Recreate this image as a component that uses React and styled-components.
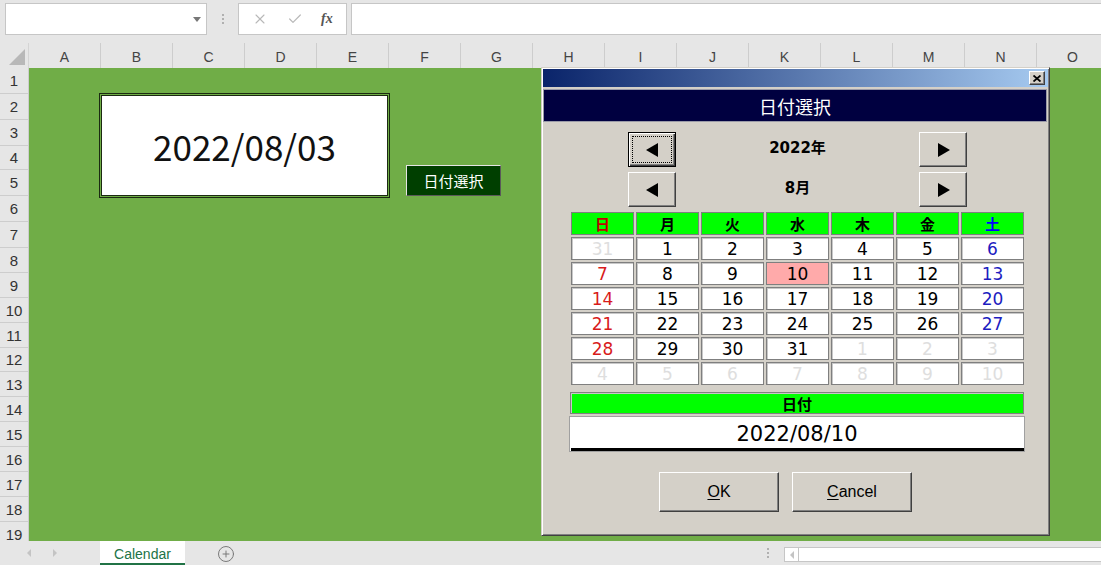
import styled, { createGlobalStyle } from "styled-components";
import { X, Check, CirclePlus } from "lucide-react";

const GlobalStyle = createGlobalStyle`
  html, body { margin: 0; padding: 0; }
  body {
    font-family: "Liberation Sans", "Noto Sans CJK JP", sans-serif;
    background: #e6e6e6;
    overflow: hidden;
  }
  * { box-sizing: border-box; }
`;

const COLS = "ABCDEFGHIJKLMNO".split("");
const ROW_H = [26, 26, 26, 24, 26, 26, 26, 25, 25, 25, 25, 24, 25, 25, 25, 25, 25, 25, 25];
const WEEK = ["日", "月", "火", "水", "木", "金", "土"];

// 2022年8月 (前後月は灰色)
const DAYS = [
  [31, 1, 2, 3, 4, 5, 6],
  [7, 8, 9, 10, 11, 12, 13],
  [14, 15, 16, 17, 18, 19, 20],
  [21, 22, 23, 24, 25, 26, 27],
  [28, 29, 30, 31, 1, 2, 3],
  [4, 5, 6, 7, 8, 9, 10],
];

const Root = styled.div`
  position: relative;
  width: 1101px;
  height: 565px;
  display: flex;
  flex-direction: column;
  overflow: hidden;
`;

/* ---------- formula bar ---------- */
const Toolbar = styled.div`
  height: 43px;
  flex-shrink: 0;
  display: flex;
  align-items: flex-start;
  padding: 3px 0 0 5px;
  background: #e6e6e6;
`;

const NameBox = styled.div`
  width: 202px;
  height: 32px;
  background: #fff;
  border: 1px solid #c6c6c6;
  display: flex;
  align-items: center;
  justify-content: flex-end;
  padding-right: 5px;

  &::after {
    content: "";
    border-left: 4px solid transparent;
    border-right: 4px solid transparent;
    border-top: 5px solid #777;
  }
`;

const Dots = styled.div`
  width: 31px;
  height: 32px;
  display: flex;
  flex-direction: column;
  align-items: center;
  justify-content: center;
  gap: 2px;

  span {
    width: 2px;
    height: 2px;
    background: #b0b0b0;
  }
`;

const FxBox = styled.div`
  width: 109px;
  height: 32px;
  background: #fff;
  border: 1px solid #c6c6c6;
  display: flex;
  align-items: center;
  justify-content: space-around;
  padding: 0 4px;
  color: #b8b8b8;

  i {
    font-family: "Liberation Serif", serif;
    font-size: 14px;
    color: #555;
    font-weight: bold;
  }
`;

const Formula = styled.div`
  flex: 1;
  height: 32px;
  margin-left: 4px;
  background: #fff;
  border: 1px solid #c6c6c6;
  border-right: none;
`;

/* ---------- sheet ---------- */
const Sheet = styled.div`
  flex: 1;
  min-height: 0;
  display: grid;
  grid-template-columns: 29px 1fr;
  grid-template-rows: 25px 1fr;
  overflow: hidden;
`;

const Corner = styled.div`
  position: relative;
  background: #e6e6e6;
  border-right: 1px solid #d4d4d4;

  &::after {
    content: "";
    position: absolute;
    right: 3px;
    bottom: 3px;
    border-left: 16px solid transparent;
    border-bottom: 16px solid #b8b8b8;
  }
`;

const ColHeads = styled.div`
  display: flex;
  overflow: hidden;
  background: #e6e6e6;
`;

const ColHead = styled.div`
  width: 72px;
  flex-shrink: 0;
  display: flex;
  align-items: center;
  justify-content: center;
  padding-top: 3px;
  border-right: 1px solid #cdcdcd;
  font-size: 14px;
  color: #444;
`;

const RowHeads = styled.div`
  display: flex;
  flex-direction: column;
  overflow: hidden;
  background: #e6e6e6;
  border-right: 1px solid #cdcdcd;
`;

const RowHead = styled.div`
  height: ${(p) => p.$h}px;
  flex-shrink: 0;
  display: flex;
  align-items: center;
  justify-content: center;
  border-bottom: 1px solid #cdcdcd;
  font-size: 15px;
  color: #333;
`;

const Cells = styled.div`
  position: relative;
  background: #70ad47;
`;

const DateBox = styled.div`
  position: absolute;
  left: 70px;
  top: 25px;
  width: 291px;
  height: 105px;
  border: 3px double #1b2a12;
  background: #fff;
  background-clip: padding-box;
  display: flex;
  align-items: center;
  justify-content: center;
  font-family: "Noto Sans CJK JP", sans-serif;
  font-size: 35px;
  color: #111;
`;

const PickButton = styled.div`
  position: absolute;
  left: 377px;
  top: 97px;
  width: 95px;
  height: 31px;
  background: #003f00;
  border: 1px solid;
  border-color: #e4e4e4 #5a5a5a #5a5a5a #e4e4e4;
  color: #fff;
  display: flex;
  align-items: center;
  justify-content: center;
  font-family: "Noto Sans CJK JP", sans-serif;
  font-size: 15px;
`;

/* ---------- dialog ---------- */
const Dialog = styled.div`
  position: absolute;
  left: 541px;
  top: 67px;
  width: 509px;
  height: 469px;
  background: #d4d0c8;
  border: 1px solid;
  border-color: #d4d0c8 #404040 #404040 #d4d0c8;
  box-shadow: inset 1px 1px 0 #fff, inset -1px -1px 0 #808080;
  padding: 1px;
  display: flex;
  flex-direction: column;
  font-family: "DejaVu Sans", "Noto Sans CJK JP", sans-serif;
`;

const TitleBar = styled.div`
  height: 18px;
  flex-shrink: 0;
  background: linear-gradient(to right, #0a246a, #a6caf0);
  display: flex;
  align-items: center;
  justify-content: flex-end;
  padding-right: 3px;
`;

const CloseBtn = styled.div`
  width: 16px;
  height: 14px;
  background: #d4d0c8;
  border: 1px solid;
  border-color: #fff #404040 #404040 #fff;
  box-shadow: inset -1px -1px 0 #808080;
  display: flex;
  align-items: center;
  justify-content: center;
`;

const Banner = styled.div`
  margin: 2px 1px 0 0;
  height: 33px;
  flex-shrink: 0;
  background: #000040;
  border: 1px solid #9a9aa8;
  color: #fff;
  display: flex;
  align-items: center;
  justify-content: center;
  font-family: "Noto Sans CJK JP", sans-serif;
  font-size: 18px;
`;

const NavRow = styled.div`
  margin: ${(p) => p.$top}px 0 0 85px;
  width: 339px;
  height: 35px;
  display: grid;
  grid-template-columns: 48px 1fr 48px;
`;

const NavLabel = styled.div`
  display: flex;
  align-items: center;
  justify-content: center;
  padding-bottom: 7px;
  font-weight: bold;
  font-size: 15px;
  color: #000;
`;

const NavButton = styled.div`
  background: #d4d0c8;
  display: flex;
  align-items: center;
  justify-content: center;
  border: 1px solid;
  border-color: ${(p) => (p.$focus ? "#000" : "#fff #404040 #404040 #fff")};
  box-shadow: ${(p) =>
    p.$focus
      ? "inset 1px 1px 0 #fff, inset -1px -1px 0 #404040, inset -2px -2px 0 #808080"
      : "inset -1px -1px 0 #808080"};
  outline: ${(p) => (p.$focus ? "1px dotted #000" : "none")};
  outline-offset: -5px;
`;

const CalGrid = styled.div`
  margin: 5px 0 0 28px;
  width: 453px;
  display: grid;
  grid-template-columns: repeat(7, 63px);
  grid-auto-rows: 23px;
  column-gap: 2px;
  row-gap: 2px;
`;

const Cell = styled.div`
  background: ${(p) => p.$bg || "#fff"};
  color: ${(p) => p.$color || "#000"};
  border: 1px solid #7f7f7f;
  box-shadow: ${(p) => (p.$bg ? "none" : "inset 1px 1px 0 #c8c8c8")};
  display: flex;
  align-items: center;
  justify-content: center;
  font-size: 17px;
`;

const HeadCell = styled(Cell)`
  background: #00ff00;
  box-shadow: none;
  font-family: "Noto Sans CJK JP", sans-serif;
  font-weight: bold;
  font-size: 15px;
`;

const DateLabel = styled.div`
  margin: 7px 0 0 27px;
  width: 454px;
  height: 22px;
  background: #00ff00;
  border: 1px solid #808080;
  box-shadow: inset 1px 1px 0 #c8c8c8;
  display: flex;
  align-items: center;
  justify-content: center;
  font-family: "Noto Sans CJK JP", sans-serif;
  font-weight: bold;
  font-size: 15px;
`;

const DateValue = styled.div`
  margin: 2px 0 0 26px;
  width: 456px;
  height: 36px;
  background: #fff;
  border: 1px solid #a0a0a0;
  box-shadow: inset 1px 0 0 #fff, inset 0 -3px 0 #000;
  display: flex;
  align-items: center;
  justify-content: center;
  font-size: 21px;
  color: #000;
`;

const ButtonRow = styled.div`
  margin: 20px 0 0 116px;
  display: flex;
  gap: 13px;
`;

const DlgButton = styled.div`
  width: 120px;
  height: 40px;
  background: #d4d0c8;
  border: 1px solid;
  border-color: #fff #404040 #404040 #fff;
  box-shadow: inset -1px -1px 0 #808080;
  display: flex;
  align-items: center;
  justify-content: center;
  font-family: "Liberation Sans", sans-serif;
  font-size: 16px;
  color: #000;

  u { text-underline-offset: 2px; }
`;

/* ---------- sheet tabs ---------- */
const BottomBar = styled.div`
  height: 24px;
  flex-shrink: 0;
  display: flex;
  align-items: stretch;
  background: #e6e6e6;
`;

const TabNav = styled.div`
  width: 100px;
  display: flex;
  align-items: center;
  padding-left: 27px;
  gap: 22px;
`;

const Arrow = styled.span`
  width: 0;
  height: 0;
  border-top: 4px solid transparent;
  border-bottom: 4px solid transparent;
  ${(p) => (p.$dir === "left" ? "border-right: 4px solid #c4c4c4;" : "border-left: 4px solid #c4c4c4;")}
`;

const Tab = styled.div`
  width: 85px;
  background: #fff;
  color: #217346;
  border-bottom: 2px solid #217346;
  display: flex;
  align-items: center;
  justify-content: center;
  padding-top: 3px;
  font-size: 14px;
`;

const AddSheet = styled.div`
  width: 85px;
  display: flex;
  align-items: center;
  padding: 2px 0 0 32px;
  color: #777;
`;

const Spacer = styled.div`
  flex: 1;
`;

const BarDots = styled(Dots)`
  width: 16px;
  height: 24px;
  margin-right: 8px;
`;

const HScroll = styled.div`
  width: 317px;
  margin: 6px 0 3px;
  background: #fff;
  border: 1px solid #c6c6c6;
  border-right: none;
  display: flex;
`;

const ScrollBtn = styled.div`
  width: 14px;
  border-right: 1px solid #c6c6c6;
  display: flex;
  align-items: center;
  justify-content: center;
`;

function Tri({ dir }) {
  return (
    <svg width="13" height="14" viewBox="0 0 13 14">
      {dir === "left" ? (
        <polygon points="12,0 12,14 0,7" fill="#000" />
      ) : (
        <polygon points="1,0 1,14 13,7" fill="#000" />
      )}
    </svg>
  );
}

function dayColor(r, c, d) {
  const outside = (r === 0 && d > 7) || (r >= 4 && d < 15);
  if (outside) return "#dedede";
  if (c === 0) return "#d81b1b";
  if (c === 6) return "#1c1cc0";
  return "#000";
}

export default function App() {
  return (
    <Root>
      <GlobalStyle />
      <Toolbar>
        <NameBox />
        <Dots><span /><span /><span /></Dots>
        <FxBox>
          <X size={16} strokeWidth={1.6} />
          <Check size={16} strokeWidth={1.8} />
          <i>fx</i>
        </FxBox>
        <Formula />
      </Toolbar>

      <Sheet>
        <Corner />
        <ColHeads>
          {COLS.map((c) => (
            <ColHead key={c}>{c}</ColHead>
          ))}
        </ColHeads>
        <RowHeads>
          {ROW_H.map((h, i) => (
            <RowHead key={i} $h={h}>{i + 1}</RowHead>
          ))}
        </RowHeads>
        <Cells>
          <DateBox>2022/08/03</DateBox>
          <PickButton>日付選択</PickButton>
        </Cells>
      </Sheet>

      <BottomBar>
        <TabNav>
          <Arrow $dir="left" />
          <Arrow $dir="right" />
        </TabNav>
        <Tab>Calendar</Tab>
        <AddSheet>
          <CirclePlus size={18} strokeWidth={1.3} />
        </AddSheet>
        <Spacer />
        <BarDots><span /><span /><span /></BarDots>
        <HScroll>
          <ScrollBtn>
            <Arrow $dir="left" />
          </ScrollBtn>
        </HScroll>
      </BottomBar>

      <Dialog>
        <TitleBar>
          <CloseBtn>
            <svg width="8" height="7" viewBox="0 0 8 7">
              <path d="M0.5 0.5 L7.5 6.5 M7.5 0.5 L0.5 6.5" stroke="#000" strokeWidth="1.8" />
            </svg>
          </CloseBtn>
        </TitleBar>
        <Banner>日付選択</Banner>

        <NavRow $top={10}>
          <NavButton $focus><Tri dir="left" /></NavButton>
          <NavLabel>2022年</NavLabel>
          <NavButton><Tri dir="right" /></NavButton>
        </NavRow>
        <NavRow $top={5}>
          <NavButton><Tri dir="left" /></NavButton>
          <NavLabel>8月</NavLabel>
          <NavButton><Tri dir="right" /></NavButton>
        </NavRow>

        <CalGrid>
          {WEEK.map((w, i) => (
            <HeadCell key={w} $color={i === 0 ? "#c00000" : i === 6 ? "#0000ff" : "#000"}>
              {w}
            </HeadCell>
          ))}
          {DAYS.map((row, r) =>
            row.map((d, c) => (
              <Cell
                key={`${r}-${c}`}
                $color={dayColor(r, c, d)}
                $bg={r === 1 && d === 10 ? "#ffaaaa" : null}
              >
                {d}
              </Cell>
            ))
          )}
        </CalGrid>

        <DateLabel>日付</DateLabel>
        <DateValue>2022/08/10</DateValue>

        <ButtonRow>
          <DlgButton><u>O</u>K</DlgButton>
          <DlgButton><u>C</u>ancel</DlgButton>
        </ButtonRow>
      </Dialog>
    </Root>
  );
}
